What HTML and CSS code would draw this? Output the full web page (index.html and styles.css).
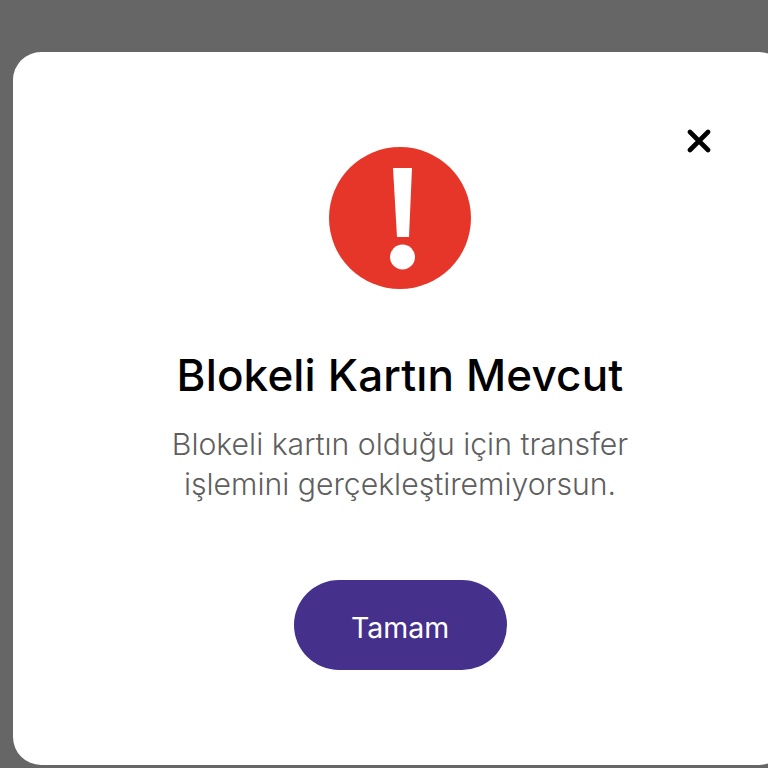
FILE: index.html
```html
<!DOCTYPE html>
<html lang="tr">
<head>
    <meta charset="UTF-8">
    <meta name="viewport" content="width=device-width, initial-scale=1.0">
    <title>Blokeli Kartın Mevcut</title>
    <link rel="stylesheet" href="styles.css">
</head>
<body>
    <div class="modal">
        <button class="close" aria-label="Kapat">
            <svg width="24" height="24" viewBox="0 0 24 24">
                <path d="M3 3L21 21M21 3L3 21" stroke="#000" stroke-width="4.6" stroke-linecap="round" fill="none"/>
            </svg>
        </button>
        <svg class="alert-icon" width="142" height="142" viewBox="0 0 142 142">
            <circle cx="71" cy="71" r="71" fill="#e63629"/>
            <path d="M64 21H83L80 90H68Z" fill="#fff"/>
            <circle cx="73.500" cy="110" r="12.500" fill="#fff"/>
        </svg>
        <h1 class="title">Blokeli Kartın Mevcut</h1>
        <p class="message">Blokeli kartın olduğu için transfer<br>işlemini gerçekleştiremiyorsun.</p>
        <button class="ok">Tamam</button>
    </div>
</body>
</html>
```

FILE: styles.css
```css
html, body {
    height: 100%;
}
body {
    margin: 0;
    padding: 52px 0 3px 13px;
    box-sizing: border-box;
    background-color: #666;
    font-family: "Inter", "Noto Sans", sans-serif;
    overflow: hidden;
}
.modal {
    position: relative;
    width: 774px;
    height: 100%;
    box-sizing: border-box;
    padding-top: 95px;
    background-color: #fff;
    border-radius: 28px;
    display: flex;
    flex-direction: column;
    align-items: center;
}
.close {
    position: absolute;
    top: 77px;
    left: 674px;
    padding: 0;
    border: none;
    background: none;
    line-height: 0;
}
.alert-icon {
    display: block;
}
.title {
    margin: 58px 0 0;
    font-size: 44px;
    line-height: 56px;
    font-weight: 500;
    letter-spacing: 0.15px;
    color: #000;
}
.message {
    margin: 21px 0 0;
    font-size: 30.2px;
    line-height: 40px;
    font-weight: 300;
    color: #5f5f5f;
    text-align: center;
}
.ok {
    margin-top: 76px;
    width: 213px;
    height: 90px;
    padding: 5px 0 0;
    border: none;
    border-radius: 45px;
    background-color: #45308c;
    color: #fff;
    font-family: inherit;
    font-size: 28.5px;
    font-weight: 400;
}
```
